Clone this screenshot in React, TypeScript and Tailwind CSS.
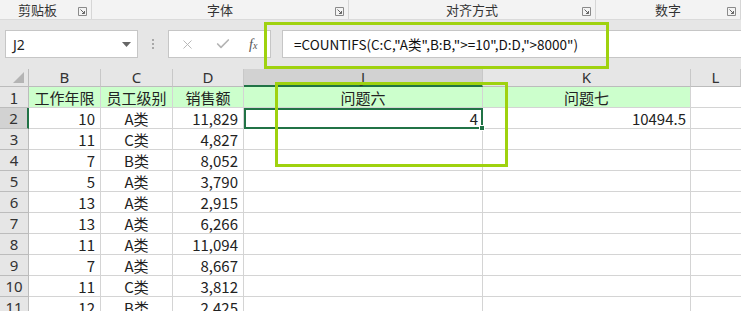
import { X, Check } from 'lucide-react';

const FONT = '"Noto Sans", "Noto Sans CJK SC", sans-serif';
const CJK = '"Noto Sans CJK SC", "Noto Sans", sans-serif';

const GROUPS = [
  { label: '剪贴板', w: 'w-[92px]' },
  { label: '字体', w: 'w-[257px]' },
  { label: '对齐方式', w: 'w-[247px]' },
  { label: '数字', w: 'flex-1' },
];

const ROWS: [string, string, string][] = [
  ['10', 'A类', '11,829'],
  ['11', 'C类', '4,827'],
  ['7', 'B类', '8,052'],
  ['5', 'A类', '3,790'],
  ['13', 'A类', '2,915'],
  ['13', 'A类', '6,266'],
  ['11', 'A类', '11,094'],
  ['7', 'A类', '8,667'],
  ['11', 'C类', '3,812'],
  ['12', 'B类', '2,425'],
];

const GRID = 'grid grid-cols-[29px_72px_72px_71px_239px_208px_1fr]';

function Launcher() {
  return (
    <svg width="9" height="9" viewBox="0 0 9 9" className="absolute bottom-[3px] right-[4px]">
      <path d="M0.5 0.5h8v8h-8z" fill="none" stroke="#8a8a8a" />
      <path d="M2.5 2.5l4 4M6.5 4v2.5H4" fill="none" stroke="#666" />
    </svg>
  );
}

export default function App() {
  return (
    <div
      className="relative h-[311px] w-[741px] overflow-hidden bg-white text-[#222]"
      style={{ fontFamily: FONT }}
    >
      {/* ribbon group labels */}
      <div className="flex h-[20px] border-b border-[#dadada] bg-[#f3f3f3]">
        {GROUPS.map((g) => (
          <div
            key={g.label}
            className={`relative flex ${g.w} items-center justify-center border-r border-[#d6d6d6] text-[13px] leading-none text-[#333]`}
            style={{ fontFamily: CJK }}
          >
            <span className={g.label === '剪贴板' ? '-ml-[16px]' : ''}>{g.label}</span>
            <Launcher />
          </div>
        ))}
      </div>

      {/* formula bar */}
      <div className="flex h-[49px] items-start bg-[#e6e6e6] pt-[10px]">
        <div className="ml-[5px] flex h-[28px] w-[133px] items-center justify-between border border-[#c6c6c6] bg-white pl-[7px] pr-[6px] text-[14px]">
          <span>J2</span>
          <svg width="9" height="5" viewBox="0 0 9 5">
            <path d="M0 0h9L4.5 5z" fill="#666" />
          </svg>
        </div>
        <div className="flex h-[28px] w-[30px] flex-col items-center justify-center gap-[2px]">
          <span className="h-[2px] w-[2px] bg-[#a8a8a8]" />
          <span className="h-[2px] w-[2px] bg-[#a8a8a8]" />
          <span className="h-[2px] w-[2px] bg-[#a8a8a8]" />
        </div>
        <div className="flex h-[28px] w-[103px] items-center border border-[#c6c6c6] bg-white">
          <X className="ml-[11px] text-[#b4b4b4]" size={15} strokeWidth={1.5} />
          <Check className="ml-[20px] text-[#b4b4b4]" size={16} strokeWidth={2.5} />
          <span
            className="ml-[18px] text-[14px] italic text-[#555]"
            style={{ fontFamily: '"Liberation Serif", serif' }}
          >
            f<span className="text-[10px]">x</span>
          </span>
        </div>
        <div
          className="ml-[11px] flex h-[28px] flex-1 items-center border border-r-0 border-[#c6c6c6] bg-white pl-[11px] text-[13.5px] text-[#111]"
          style={{ fontFamily: CJK }}
        >
          =COUNTIFS(C:C,"A类",B:B,"&gt;=10",D:D,"&gt;8000")
        </div>
      </div>

      {/* column headers */}
      <div className={`${GRID} h-[18px] bg-[#e6e6e6] text-[15px] leading-none text-[#333]`}>
        <div className="flex items-end justify-end border-b border-r border-[#bcbcbc] pb-[3px] pr-[4px]">
          <svg width="11" height="11" viewBox="0 0 11 11">
            <path d="M11 0v11H0z" fill="#b4b4b4" />
          </svg>
        </div>
        {['B', 'C', 'D', 'J', 'K', 'L'].map((c) => (
          <div
            key={c}
            className={`flex items-center justify-center border-r border-[#c8c8c8] ${
              c === 'J'
                ? 'border-b-2 border-b-[#217346] bg-[#d2d2d2]'
                : 'border-b border-b-[#bcbcbc]'
            }`}
          >
            {c}
          </div>
        ))}
      </div>

      {/* rows */}
      <div className="text-[15px] leading-none" style={{ fontFamily: CJK }}>
        <div className={`${GRID} h-[21px]`}>
          <div className="flex items-center justify-center border-b border-r border-[#bcbcbc] bg-[#e6e6e6] text-[#333]">
            1
          </div>
          {['工作年限', '员工级别', '销售额', '问题六', '问题七'].map((t) => (
            <div
              key={t}
              className="flex items-center justify-center border-b border-r border-[#d4d4d4] bg-[#ccffcc]"
            >
              {t}
            </div>
          ))}
          <div className="border-b border-[#d4d4d4]" />
        </div>
        {ROWS.map(([years, level, sales], i) => {
          const row = i + 2;
          const sel = row === 2;
          return (
            <div key={row} className={`${GRID} h-[21px]`}>
              <div
                className={`flex items-center justify-center border-b border-[#bcbcbc] text-[#333] ${
                  sel ? 'border-r-2 border-r-[#217346] bg-[#d2d2d2]' : 'border-r bg-[#e6e6e6]'
                }`}
                style={{ fontFamily: FONT }}
              >
                {row}
              </div>
              <div className="flex items-center justify-end border-b border-r border-[#d4d4d4] pr-[5px]">
                {years}
              </div>
              <div className="flex items-center justify-center border-b border-r border-[#d4d4d4]">
                {level}
              </div>
              <div className="flex items-center justify-end border-b border-r border-[#d4d4d4] pr-[5px]">
                {sales}
              </div>
              {sel ? (
                <div className="relative flex items-center justify-end border-2 border-[#217346] pr-[3px]">
                  4
                  <span className="absolute -bottom-[4px] -right-[4px] h-[6px] w-[6px] border border-white bg-[#217346]" />
                </div>
              ) : (
                <div className="border-b border-r border-[#d4d4d4]" />
              )}
              <div className="flex items-center justify-end border-b border-r border-[#d4d4d4] pr-[4px]">
                {sel ? '10494.5' : ''}
              </div>
              <div className="border-b border-[#d4d4d4]" />
            </div>
          );
        })}
      </div>

      {/* annotation boxes */}
      <div className="absolute left-[264px] top-[22px] h-[47px] w-[345px] border-[3px] border-[#9fd20f]" />
      <div className="absolute left-[275px] top-[82px] h-[85px] w-[233px] border-[3px] border-[#9fd20f]" />
    </div>
  );
}
